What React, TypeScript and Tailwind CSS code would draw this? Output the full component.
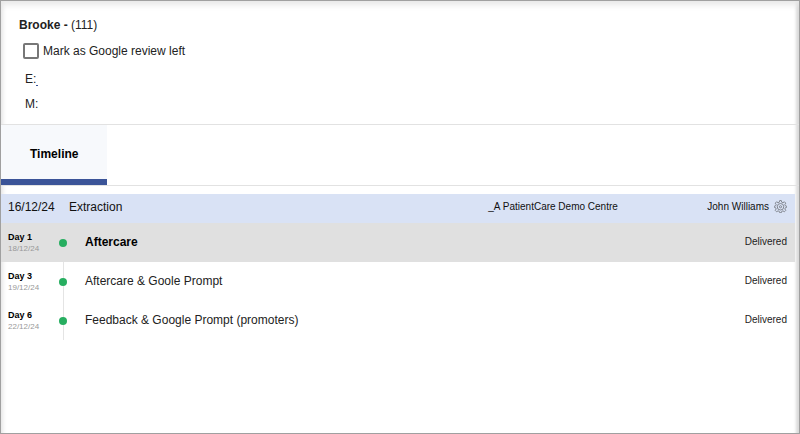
import { clsx } from "clsx";

const entries = [
  { day: "Day 1", date: "18/12/24", title: "Aftercare", status: "Delivered", active: true },
  { day: "Day 3", date: "19/12/24", title: "Aftercare & Goole Prompt", status: "Delivered", active: false },
  { day: "Day 6", date: "22/12/24", title: "Feedback & Google Prompt (promoters)", status: "Delivered", active: false },
];

function Gear() {
  return (
    <svg viewBox="0 0 24 24" className="size-[13px]" fill="none" stroke="#80848d" strokeWidth="1.8" strokeLinejoin="round">
      <path d="M10.500 1h3l.7 3 2.300 1 2.700-1.700 2.500 2.500L20 8.500l1 2.300 2.500.7v2l-2.500.7-1 2.300 1.700 2.700-2.500 2.500L16.500 20l-2.300 1-.7 2.500h-3L9.800 21l-2.300-1-2.700 1.700-2.500-2.500L4 16.500l-1-2.300-2.500-.7v-2l2.500-.7 1-2.300-1.700-2.700 2.500-2.500L7.500 5l2.300-1z" />
      <circle cx="12" cy="12.500" r="6" />
      <circle cx="12" cy="12.500" r="2" />
    </svg>
  );
}

function Header() {
  return (
    <header className="flex flex-col border-b border-[#e2e2e2] px-[18px] pt-4 pb-2.5 text-xs">
      <h1 className="leading-4">
        <b>Brooke -</b> (111)
      </h1>
      <label className="mt-2 ml-1 flex items-center gap-1 leading-5">
        <input
          type="checkbox"
          className="size-4 appearance-none rounded-xs border-2 border-[#777] bg-white checked:bg-[#3b5498]"
        />
        Mark as Google review left
      </label>
      <p className="mt-2 ml-1.5 leading-5">
        E:
        <a href="#email" aria-label="Email" className="inline-block h-3 w-0.5 border-b border-[#3b5498] align-middle"></a>
      </p>
      <p className="mt-[5px] ml-1.5 leading-5">M:</p>
    </header>
  );
}

export default function App() {
  return (
    <main className="min-h-screen border border-[#a0a0a0] bg-white font-['Liberation_Sans',Arial,sans-serif] text-[#222] shadow-[inset_0_9px_6px_-5px_#e8e8e8,inset_-6px_0_3px_-3px_#dadada,inset_6px_0_4px_-4px_#e6e6e6]">
      <Header />
      <nav className="flex border-b border-[#e2e2e2]">
        <button className="h-[60px] border-b-6 border-[#3b5498] bg-[#f7f9fc] px-[29px] pt-1 text-xs font-bold text-black">
          Timeline
        </button>
      </nav>

      <section className="mt-2 mr-1">
        <div className="flex h-[29px] items-center bg-[#d9e2f5] pr-2 pb-1 pl-[7px] text-xs text-[#111]">
          <span className="w-[61px]">16/12/24</span>
          <h2 className="flex-1">Extraction</h2>
          <span className="w-[219px] text-[10px]">_A PatientCare Demo Centre</span>
          <span className="mr-[5px] text-[10px]">John Williams</span>
          <button aria-label="Settings">
            <Gear />
          </button>
        </div>
        <ul>
          {entries.map((entry) => (
            <li
              key={entry.day}
              className={clsx("flex h-[39px] items-center pr-2 pl-[7px]", entry.active && "bg-[#e0e0e0]")}
            >
              <div className="w-[51px] leading-[11px]">
                <p className="text-[9px] font-bold text-black">{entry.day}</p>
                <p className="text-[8px] text-[#999]">{entry.date}</p>
              </div>
              <div className="relative flex h-full w-2 items-center justify-center">
                {!entry.active && <span className="absolute h-full w-px bg-[#e4e4e4]" />}
                <span className="relative size-2 rounded-full bg-[#27ae60]" />
              </div>
              <p className={clsx("ml-[18px] flex-1 pb-0.5 text-xs", entry.active && "font-bold text-black")}>
                {entry.title}
              </p>
              <span className="pb-0.5 text-[10px]">{entry.status}</span>
            </li>
          ))}
        </ul>
      </section>
    </main>
  );
}
